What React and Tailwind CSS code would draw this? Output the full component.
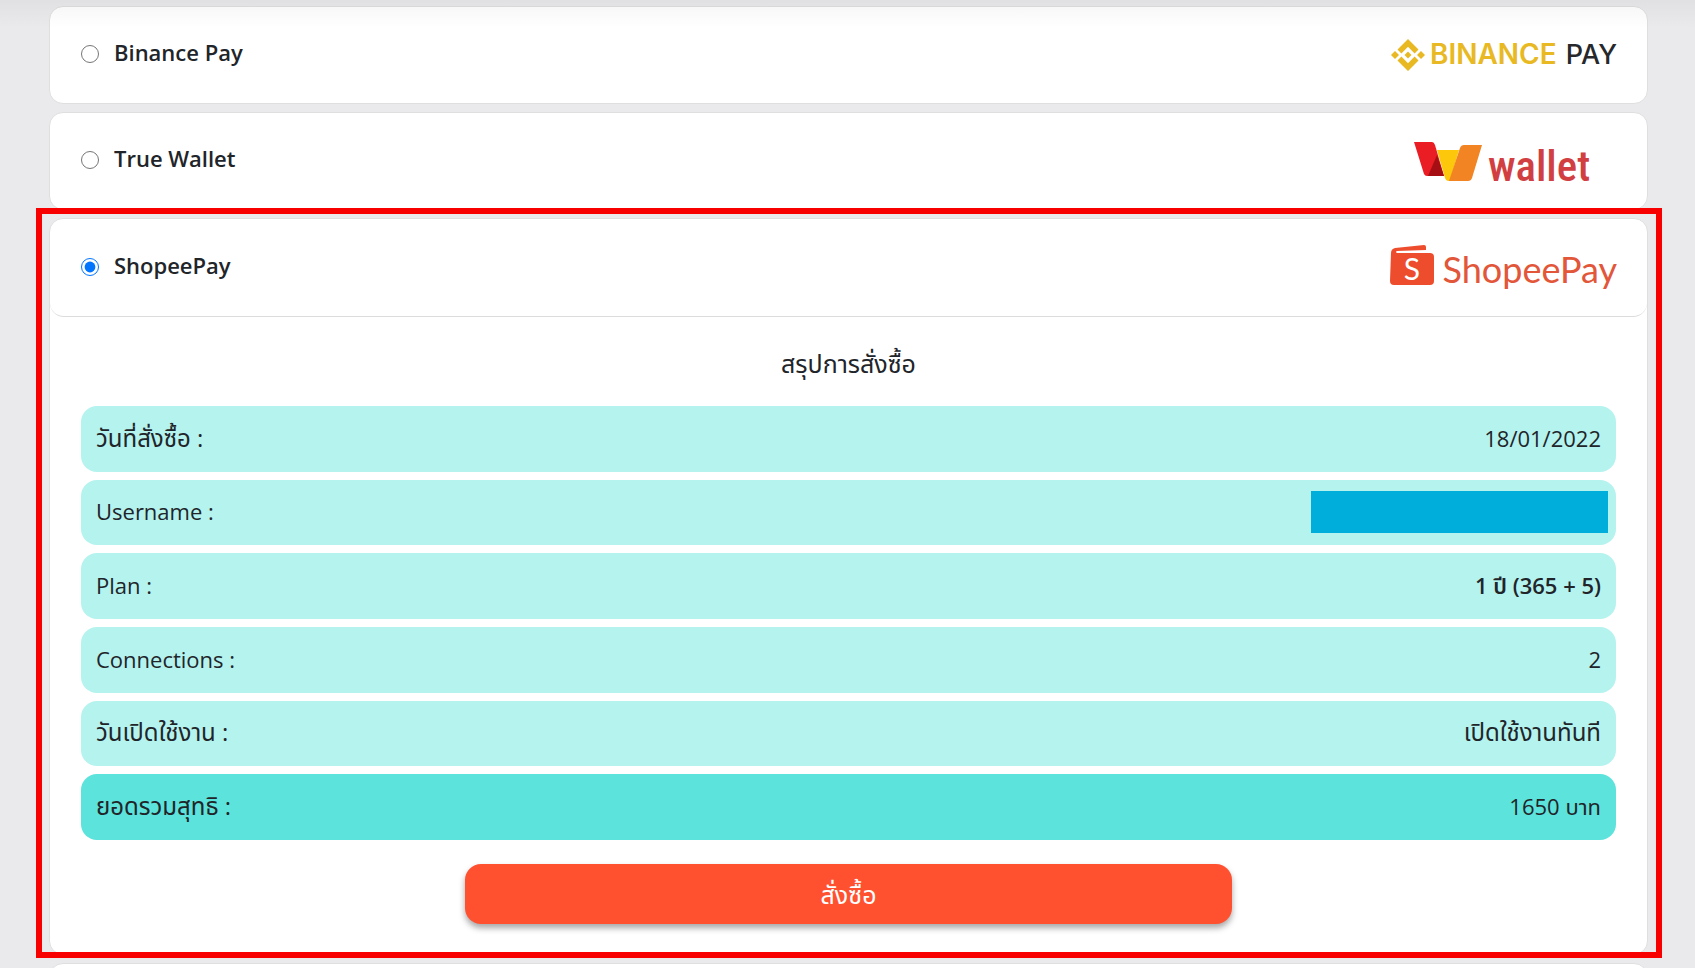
import { useState } from "react";

const summary = [
  { label: "วันที่สั่งซื้อ :", value: "18/01/2022", thaiLabel: true },
  { label: "Username :", hidden: true },
  { label: "Plan :", value: "1 ปี (365 + 5)", strong: true },
  { label: "Connections :", value: "2" },
  { label: "วันเปิดใช้งาน :", value: "เปิดใช้งานทันที", thaiLabel: true, thaiValue: true },
  { label: "ยอดรวมสุทธิ :", value: "1650 บาท", thaiLabel: true, total: true },
];

function BinanceLogo() {
  return (
    <svg width="226" height="40" viewBox="0 0 226 40" role="img" aria-label="Binance Pay">
      <g fill="#e8b923">
        <path d="M17 4 L27.5 14.5 L23.6 18.4 L17 11.8 L10.4 18.4 L6.5 14.5 Z" />
        <path d="M17 36 L27.5 25.5 L23.6 21.6 L17 28.2 L10.4 21.6 L6.5 25.5 Z" />
        <path d="M17 16.5 L20.5 20 L17 23.5 L13.5 20 Z" />
        <path d="M4 16 L8 20 L4 24 L0 20 Z" />
        <path d="M30 16 L34 20 L30 24 L26 20 Z" />
      </g>
      <text x="39" y="29" fontFamily="Inter, sans-serif" fontSize="28" fontWeight="600" fill="#e8b923">BINANCE</text>
      <text x="226" y="29" textAnchor="end" fontFamily="Inter, sans-serif" fontSize="27" fontWeight="500" fill="#26282c">PAY</text>
    </svg>
  );
}

function WalletLogo() {
  return (
    <svg width="203" height="60" viewBox="0 0 203 60" role="img" aria-label="True Wallet">
      <path d="M0 11 H18 Q20 11 21 14 L30 45 H13 Q11 45 10 43 Z" fill="#ea1c24" />
      <path d="M23 24 L30 45 H14 Z" fill="#a50f14" />
      <path d="M23 19 H45 L36 50 H34 Q32 50 31 47 Z" fill="#fdc70c" />
      <path d="M46 17 Q47 14 50 14 H68 L58 47 Q57 50 54 50 H35 Z" fill="#f28423" />
      <text x="74" y="50" fontFamily="'Roboto Condensed', sans-serif" fontSize="43" fontWeight="500" fill="#d23f42">wallet</text>
    </svg>
  );
}

function ShopeeLogo() {
  return (
    <svg width="227" height="54" viewBox="0 -4 227 54" role="img" aria-label="ShopeePay">
      <path d="M1 8 Q1 4 5 3 L34 0 Q36 0 36 2 V5 L7 6 Q5 7 7 8 H40 Q44 8 44 12 V36 Q44 40 40 40 H4 Q0 40 0 36 Z" fill="#ee4d2d" />
      <text x="22" y="35" textAnchor="middle" fontFamily="Lato, sans-serif" fontSize="30" fill="#fff">S</text>
      <text x="227" y="38" textAnchor="end" fontFamily="Lato, sans-serif" fontSize="36" fill="#e2563a">ShopeePay</text>
    </svg>
  );
}

function PaymentOption({ id, label, logo, selected, onSelect, children }) {
  return (
    <section className="relative rounded-[14px] border border-[#dfdfe0] bg-white">
      <div className={`flex items-center justify-between rounded-[14px] pr-[30px] pl-[31px] ${children ? "h-[98px] border-b border-[#dcdcdc]" : "h-24"}`}>
        <label htmlFor={id} className="flex items-center gap-[15px] pb-0.5 text-[22px] leading-8 font-semibold">
          <input
            id={id}
            type="radio"
            name="payment"
            checked={selected}
            onChange={() => onSelect(id)}
            className="size-[18px] accent-[#0075ff]"
          />
          <span className="pb-1">{label}</span>
        </label>
        {logo}
      </div>
      {children}
    </section>
  );
}

function SummaryRow({ item }) {
  return (
    <div className={`flex items-center justify-between rounded-2xl px-[15px] ${item.total ? "bg-[#5be3dc]" : "bg-[#b5f3ef]"}`}>
      <dt className={`pb-0.5 ${item.thaiLabel ? "text-2xl" : ""}`}>{item.label}</dt>
      {item.hidden ? (
        <dd className="-mr-[7px] h-[42px] w-[297px] bg-[#00aedb]" />
      ) : (
        <dd className={`pb-0.5 ${item.strong ? "font-semibold" : ""} ${item.thaiValue ? "text-2xl" : ""}`}>{item.value}</dd>
      )}
    </div>
  );
}

export default function App() {
  const [method, setMethod] = useState("shopee");

  return (
    <div className="relative h-screen overflow-hidden bg-[#eaeaec] font-['Open_Sans','Noto_Sans_Thai',sans-serif] text-[22px] leading-8 text-[#212529]">
      <main className="flex flex-col gap-2 pt-1.5 pr-[47px] pl-[49px]">
        <PaymentOption id="binance" label="Binance Pay" logo={<BinanceLogo />} selected={method === "binance"} onSelect={setMethod} />
        <PaymentOption id="true" label="True Wallet" logo={<WalletLogo />} selected={method === "true"} onSelect={setMethod} />
        <PaymentOption id="shopee" label="ShopeePay" logo={<ShopeeLogo />} selected={method === "shopee"} onSelect={setMethod}>
          <div className="px-[31px] pt-[30px] pb-[30px]">
            <h2 className="mb-[27px] text-center text-[25px] leading-8">สรุปการสั่งซื้อ</h2>
            <dl className="grid h-[434px] auto-rows-fr gap-2">
              {summary.map((item) => (
                <SummaryRow key={item.label} item={item} />
              ))}
            </dl>
            <button type="button" className="mx-auto mt-6 block h-[60px] w-1/2 rounded-2xl bg-[#ff5130] text-[25px] text-white shadow-[0_4px_6px_rgba(0,0,0,0.35)]">
              สั่งซื้อ
            </button>
          </div>
          <div className="pointer-events-none absolute -top-[11px] -right-[15px] -bottom-1 -left-3.5 border-6 border-[#f80000]" />
        </PaymentOption>
        <PaymentOption id="other" label="" selected={method === "other"} onSelect={setMethod} />
      </main>
      <div className="pointer-events-none absolute inset-x-0 top-0 h-7 bg-linear-to-b from-black/4 to-transparent" />
    </div>
  );
}
